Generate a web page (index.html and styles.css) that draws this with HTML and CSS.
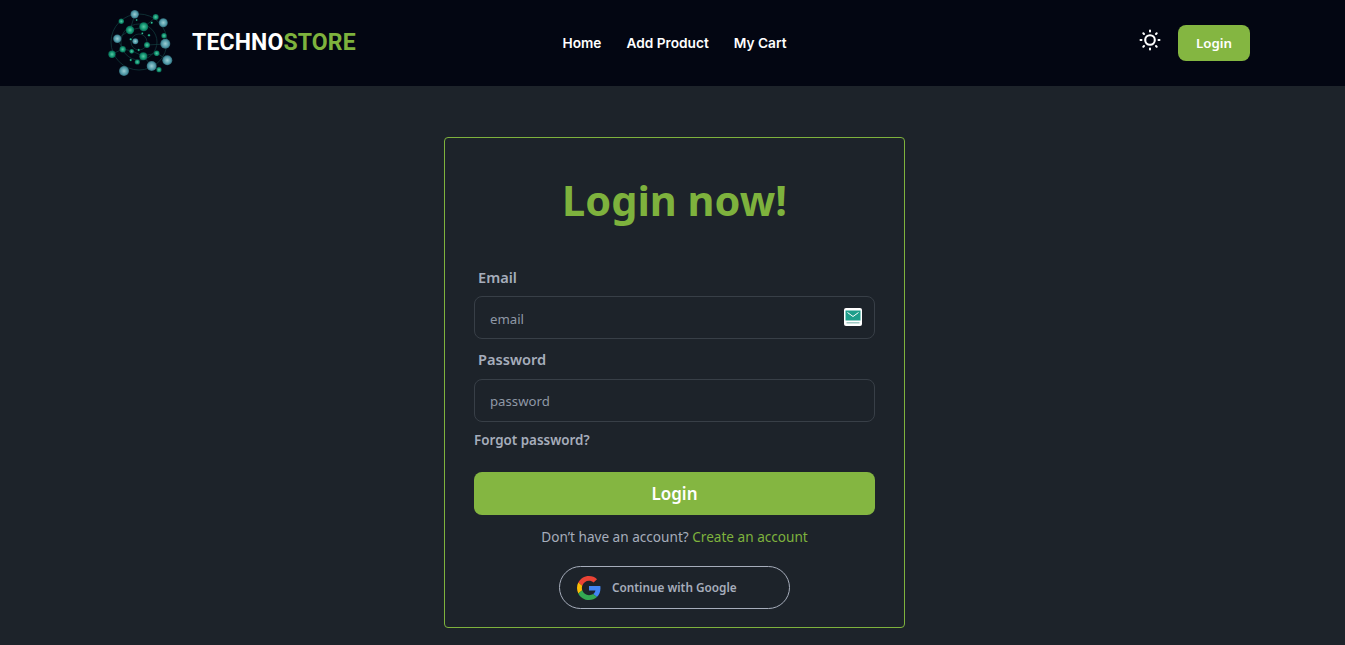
FILE: index.html
```html
<!DOCTYPE html>
<html lang="en">
<head>
    <meta charset="UTF-8">
    <title>TechnoStore</title>
    <link rel="stylesheet" href="styles.css">
</head>
<body>
    <header class="navbar">
        <a class="brand" href="#">
            <svg class="brand-logo" width="68" height="68" viewBox="0 0 68 68">
                <defs>
                    <radialGradient id="nodeBlue">
                        <stop offset="0" stop-color="#9ccfd4"/>
                        <stop offset="0.7" stop-color="#4f97a6"/>
                        <stop offset="1" stop-color="#2c6572"/>
                    </radialGradient>
                    <radialGradient id="nodeGreen">
                        <stop offset="0" stop-color="#58c9a6"/>
                        <stop offset="0.7" stop-color="#0f8f6c"/>
                        <stop offset="1" stop-color="#0b5f50"/>
                    </radialGradient>
                </defs>
                <g fill="none" stroke="#123f40" stroke-width="0.7">
                    <circle cx="33" cy="33" r="28"/>
                    <circle cx="33" cy="33" r="18"/>
                    <circle cx="33" cy="33" r="8"/>
                    <path d="M29 5 L24 21 L11 30 L17 40 L6 45 M38 18 L50 8 M37 47 L46 57 L53 61 M41 36 L59 35 M24 21 L38 18 M17 40 L26 42 L37 47 L51 44 L61 51"/>
                </g>
                <g fill="url(#nodeBlue)">
                    <circle cx="28.700" cy="5.300" r="4.200"/>
                    <circle cx="57.300" cy="13.700" r="4.500"/>
                    <circle cx="11.300" cy="29.700" r="4.200"/>
                    <circle cx="59.300" cy="34.700" r="5"/>
                    <circle cx="61.300" cy="51.300" r="5"/>
                    <circle cx="45.700" cy="57" r="5"/>
                    <circle cx="18" cy="62" r="5"/>
                    <circle cx="29.300" cy="32.300" r="3"/>
                </g>
                <g fill="url(#nodeGreen)">
                    <circle cx="49.700" cy="8" r="3"/>
                    <circle cx="15.300" cy="12.300" r="2.700"/>
                    <circle cx="24" cy="21" r="4.200"/>
                    <circle cx="37.700" cy="17.700" r="4.500"/>
                    <circle cx="58" cy="26.700" r="2.700"/>
                    <circle cx="41" cy="36" r="3"/>
                    <circle cx="6" cy="45.300" r="3.700"/>
                    <circle cx="16.700" cy="40.300" r="3.200"/>
                    <circle cx="25.700" cy="42.300" r="2.400"/>
                    <circle cx="37.300" cy="47.300" r="4"/>
                    <circle cx="50.700" cy="44.300" r="2.800"/>
                    <circle cx="31.300" cy="53" r="2.600"/>
                    <circle cx="53" cy="60.700" r="2.600"/>
                    <circle cx="24.700" cy="30.300" r="1.200"/>
                    <circle cx="43" cy="26.300" r="1.300"/>
                    <circle cx="24.700" cy="51" r="1.200"/>
                    <circle cx="32.700" cy="41" r="1.200"/>
                    <circle cx="36.300" cy="24.300" r="1.100"/>
                    <circle cx="45.700" cy="13.700" r="1.200"/>
                    <circle cx="30.700" cy="11" r="1"/>
                </g>
            </svg>
            <span class="brand-name">TECHNO<span class="brand-accent">STORE</span></span>
        </a>
        <nav class="nav-links">
            <a href="#">Home</a>
            <a href="#">Add Product</a>
            <a href="#">My Cart</a>
        </nav>
        <div class="nav-actions">
            <svg class="theme-icon" width="22" height="22" viewBox="0 0 22 22" fill="none" stroke="#fff" stroke-linecap="round">
                <circle cx="11" cy="11" r="4.800" stroke-width="2.100"/>
                <path stroke-width="2" d="M11 1.500v1M11 19.500v1M1.500 11h1M19.500 11h1M4.300 4.300l.7.7M17 17l.7.7M4.300 17.700l.7-.7M17 5l.7-.7"/>
            </svg>
            <a class="nav-login" href="#">Login</a>
        </div>
    </header>

    <main class="page">
        <form class="login-card">
            <h1 class="login-title">Login now!</h1>

            <label class="field-label" for="email">Email</label>
            <div class="input-wrap">
                <input class="text-input" id="email" type="email" placeholder="email">
                <span class="mail-badge">
                    <svg width="18" height="18" viewBox="0 0 18 18">
                        <rect width="18" height="18" rx="2" fill="#fff"/>
                        <rect x="1.500" y="2.500" width="15" height="10" fill="#1f9e8b"/>
                        <path d="M3.500 4.500 L9 8.500 L14.500 4.500" fill="none" stroke="#fff" stroke-width="1"/>
                        <rect x="2.500" y="14" width="13" height="1.500" fill="#9fc9c4"/>
                    </svg>
                </span>
            </div>

            <label class="field-label" for="password">Password</label>
            <div class="input-wrap">
                <input class="text-input" id="password" type="password" placeholder="password">
            </div>

            <a class="forgot-link" href="#">Forgot password?</a>

            <button class="submit-btn" type="button">Login</button>

            <p class="signup-line">Don’t have an account? <a href="#">Create an account</a></p>

            <button class="google-btn" type="button">
                <svg width="24" height="24" viewBox="0 0 48 48">
                    <path fill="#EA4335" d="M24 9.500c3.540 0 6.710 1.220 9.210 3.600l6.850-6.850C35.900 2.380 30.470 0 24 0 14.620 0 6.510 5.380 2.560 13.220l7.980 6.190C12.430 13.720 17.740 9.500 24 9.500z"/>
                    <path fill="#4285F4" d="M46.980 24.550c0-1.570-.15-3.090-.38-4.550H24v9.020h12.940c-.58 2.960-2.260 5.480-4.780 7.180l7.730 6c4.510-4.180 7.090-10.360 7.090-17.650z"/>
                    <path fill="#FBBC05" d="M10.530 28.590c-.48-1.450-.76-2.990-.76-4.590s.27-3.140.76-4.590l-7.980-6.190C.92 16.460 0 20.120 0 24c0 3.880.92 7.540 2.560 10.780l7.970-6.190z"/>
                    <path fill="#34A853" d="M24 48c6.480 0 11.930-2.130 15.890-5.810l-7.730-6c-2.150 1.450-4.920 2.300-8.160 2.300-6.260 0-11.570-4.220-13.470-9.910l-7.980 6.190C6.510 42.620 14.620 48 24 48z"/>
                </svg>
                <span class="google-text">Continue with Google</span>
            </button>
        </form>
    </main>
</body>
</html>
```

FILE: styles.css
```css
* {
    box-sizing: border-box;
}
body {
    margin: 0;
    min-height: 100vh;
    overflow: hidden;
    background: #1d232a;
    color: #a6adbb;
    font-family: "Noto Sans", "Open Sans", sans-serif;
}
a {
    text-decoration: none;
    color: inherit;
}
.navbar {
    height: 86px;
    background: #030612;
    padding: 0 95px 0 99px;
    display: grid;
    grid-template-columns: 1fr auto 1fr;
    align-items: center;
}
.brand {
    display: flex;
    align-items: center;
    gap: 18px;
    padding-left: 7px;
}
.brand-logo {
    display: block;
}
.brand-name {
    padding-bottom: 2px;
    font-family: Roboto, sans-serif;
    font-weight: 700;
    font-size: 23px;
    letter-spacing: 0.15px;
    color: #fff;
}
.brand-accent {
    color: #7eb23d;
}
.nav-links {
    display: flex;
    gap: 25px;
    font-family: Inter, sans-serif;
    font-weight: 600;
    font-size: 13.700px;
    color: #fff;
}
.nav-actions {
    display: flex;
    align-items: center;
    justify-content: flex-end;
    gap: 17px;
}
.theme-icon {
    margin-bottom: 7px;
}
.nav-login {
    width: 72px;
    height: 36px;
    display: flex;
    align-items: center;
    justify-content: center;
    background: #84b641;
    border-radius: 8px;
    color: #fff;
    font-size: 13.300px;
    font-weight: 600;
}
.page {
    display: flex;
    justify-content: center;
    padding: 51px 0 0 4px;
}
.login-card {
    width: 461px;
    height: 491px;
    border: 1px solid #7eb23d;
    border-radius: 4px;
    padding: 32px 29px 0;
    display: flex;
    flex-direction: column;
}
.login-title {
    margin: 0 0 37.500px;
    text-align: center;
    font-size: 41.500px;
    line-height: 60px;
    font-weight: 700;
    color: #7eb23d;
}
.field-label {
    padding-left: 4px;
    font-size: 14.600px;
    font-weight: 600;
    line-height: 18px;
    margin-bottom: 10.500px;
}
.input-wrap {
    position: relative;
    margin-bottom: 9.500px;
}
.input-wrap + .field-label {
    margin-top: 1.500px;
}
.text-input {
    display: block;
    width: 100%;
    height: 43px;
    padding: 2px 15px 0;
    background: transparent;
    border: 1px solid #383f47;
    border-radius: 8px;
    color: #a6adbb;
    font: 13.200px "Noto Sans", sans-serif;
}
.text-input::placeholder {
    color: #8f98a6;
}
.mail-badge {
    position: absolute;
    right: 13px;
    top: 12px;
    line-height: 0;
}
.forgot-link {
    font-size: 13.400px;
    font-weight: 600;
    line-height: 18px;
    margin-bottom: 23px;
}
.submit-btn {
    height: 43px;
    border: none;
    border-radius: 8px;
    background: #84b641;
    color: #fff;
    font: 600 17px "Noto Sans", sans-serif;
}
.signup-line {
    margin: 13px 0 20px;
    text-align: center;
    font-size: 13.600px;
    line-height: 18px;
}
.signup-line a {
    color: #7eb23d;
}
.google-btn {
    align-self: center;
    width: 231px;
    height: 43px;
    display: flex;
    align-items: center;
    gap: 11px;
    padding: 0 17px;
    background: transparent;
    border: 1px solid #a6adbb;
    border-radius: 22px;
    color: #a6adbb;
    font: 600 11.800px "Noto Sans", sans-serif;
}
.google-text {
    padding-bottom: 2px;
}
```
